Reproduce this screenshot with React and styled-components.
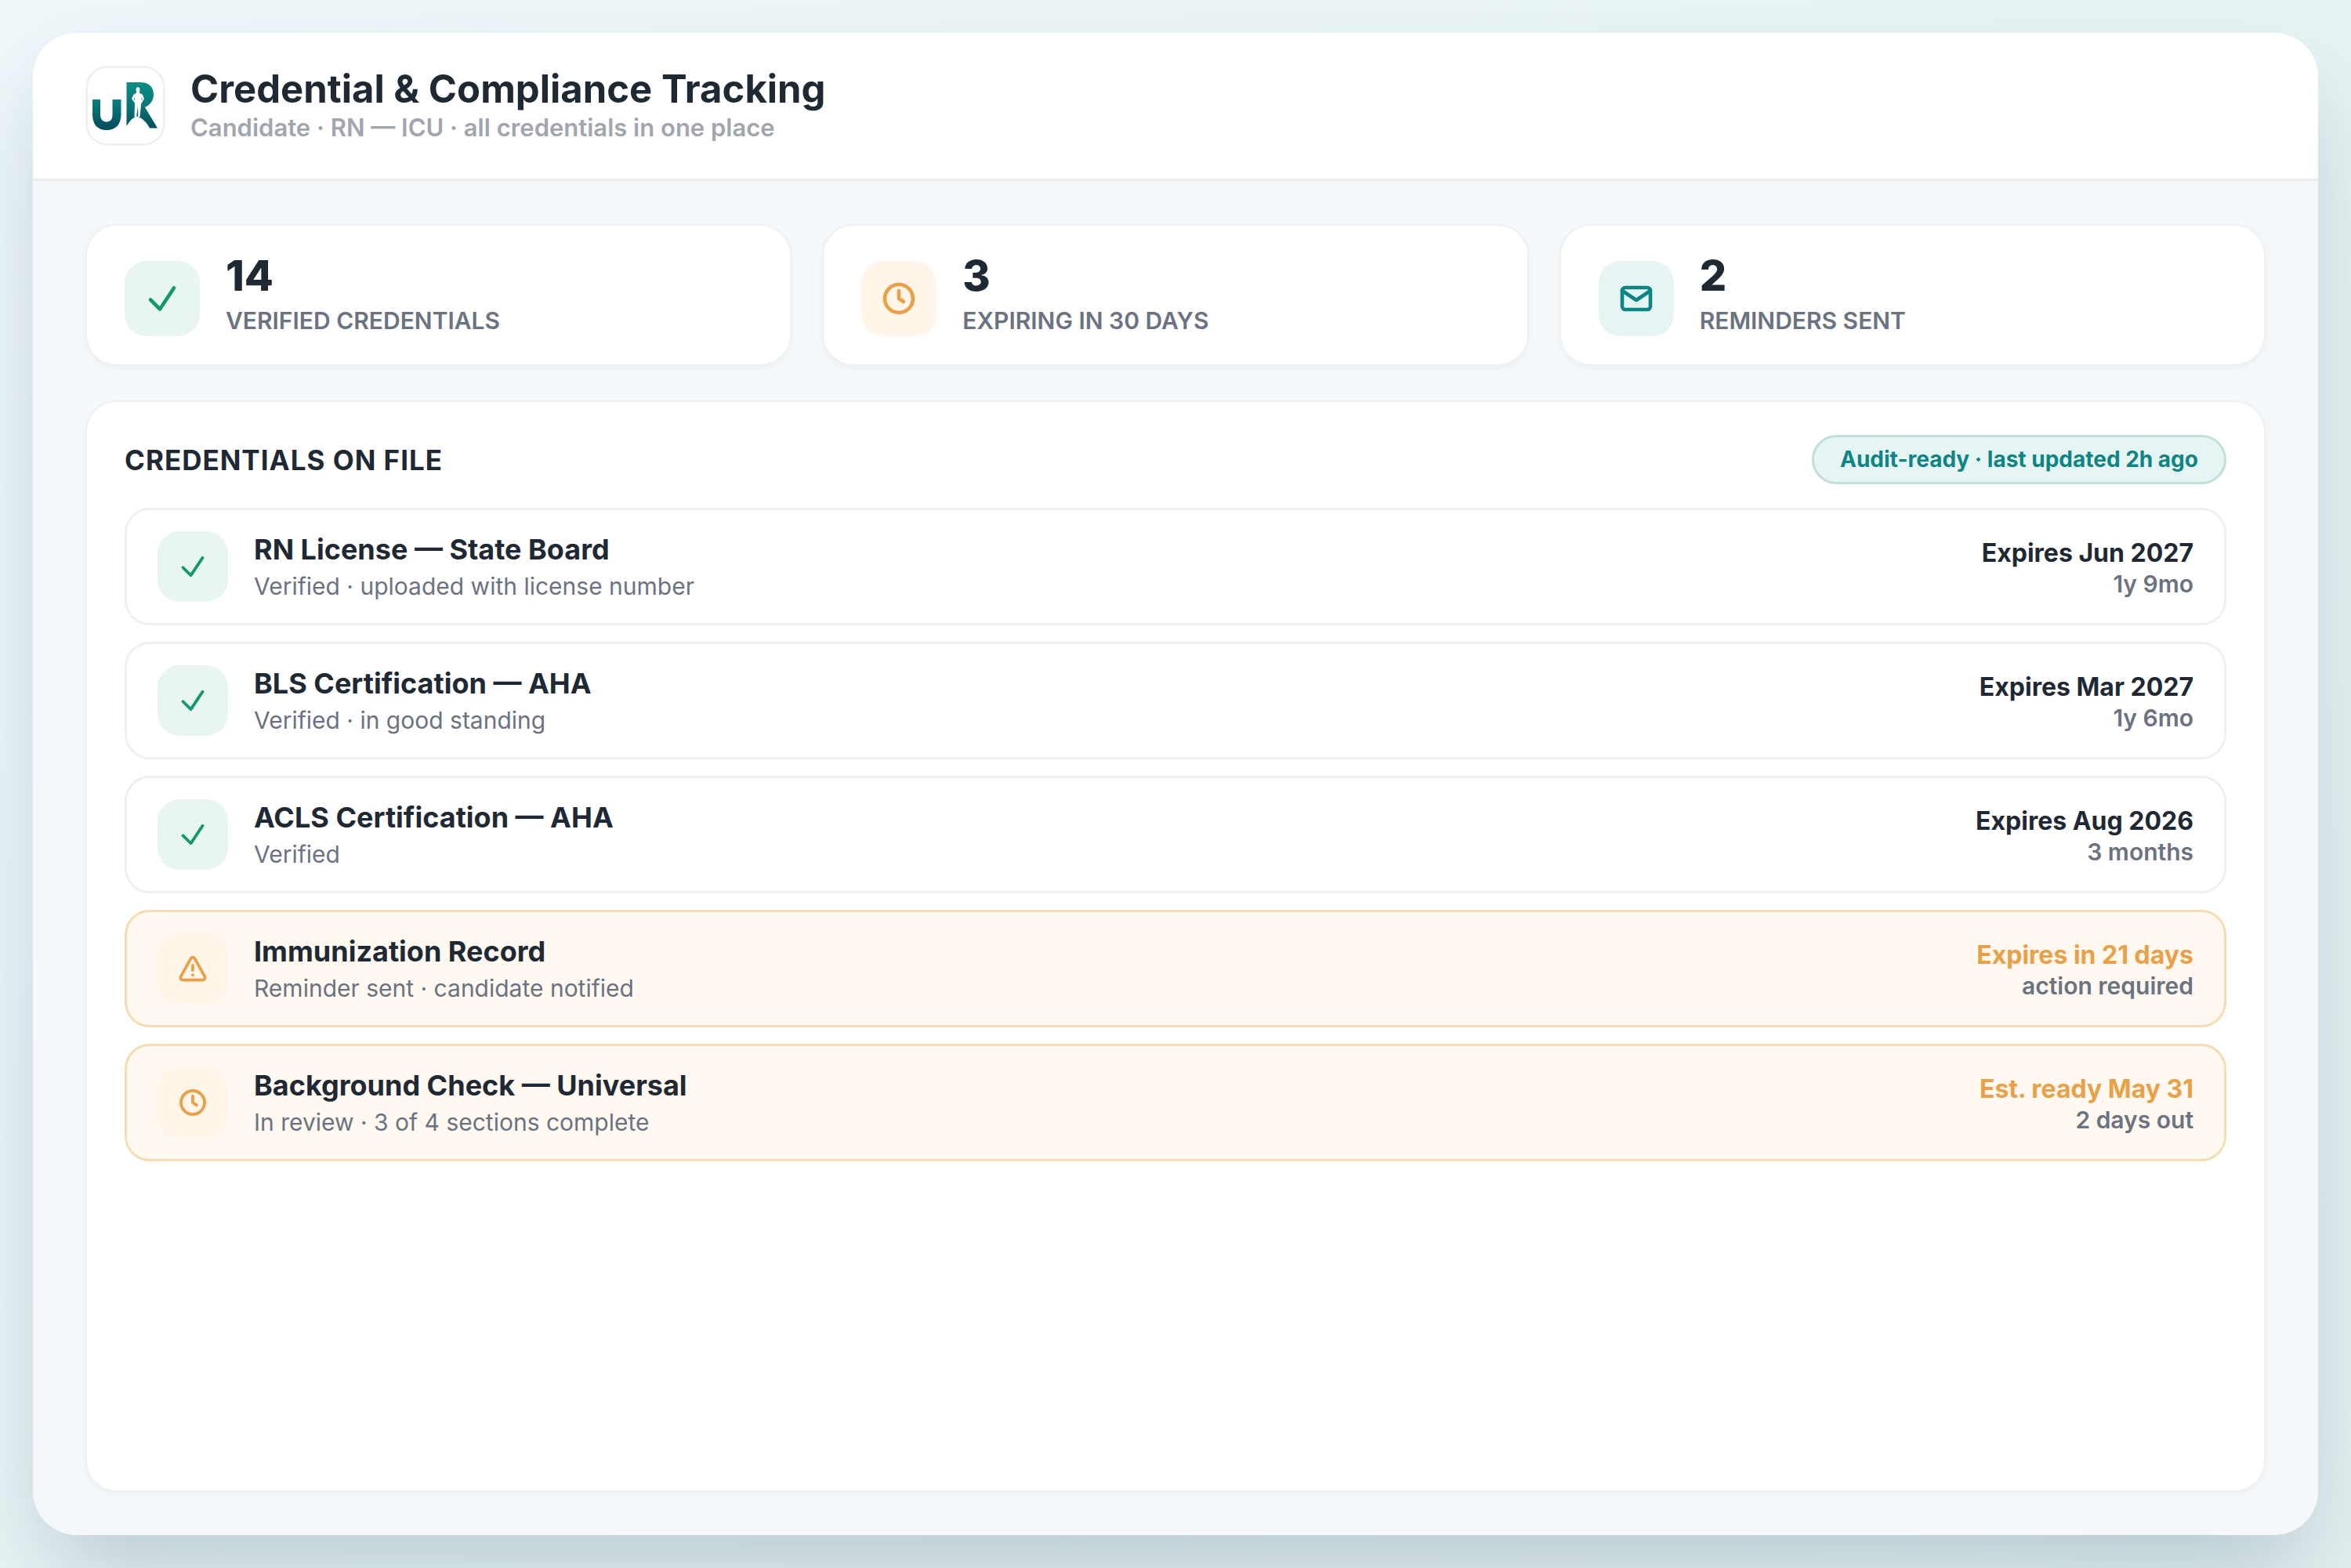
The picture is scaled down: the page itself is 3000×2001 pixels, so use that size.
import React from 'react'
import styled, { createGlobalStyle } from 'styled-components'

const GlobalStyle = createGlobalStyle`
  * {
    box-sizing: border-box;
  }

  body {
    margin: 0;
    font-family: Inter, 'Liberation Sans', sans-serif;
    color: #1f2933;
    background: #e6f1f2;
  }

  h1, h2, h3, p, ul {
    margin: 0;
    padding: 0;
  }
`

const tones = {
  green: { color: '#12996b', background: '#e9f6f0' },
  amber: { color: '#e9a047', background: '#fff5e8' },
  teal: { color: '#0c8583', background: '#e6f4f3' },
}

const Page = styled.div`
  min-height: 100vh;
  display: flex;
  padding: 42px;
  overflow: hidden;
  background: linear-gradient(135deg, #eef7fa 0%, #e8f3f4 50%, #e4f0f1 100%);
`

const Shell = styled.main`
  flex: 1;
  display: flex;
  flex-direction: column;
  border-radius: 56px;
  overflow: hidden;
  background: #f5f8fa;
  box-shadow: 0 60px 120px -20px rgba(20, 60, 85, 0.23);
`

const Header = styled.header`
  display: flex;
  align-items: center;
  gap: 32px;
  padding: 42px 67px;
  background: #fff;
  border-bottom: 3px solid #eceff0;
`

const LogoBox = styled.div`
  width: 102px;
  height: 102px;
  display: flex;
  align-items: center;
  justify-content: center;
  border: 3px solid #f0f1f1;
  border-radius: 28px;
  background: #fff;
`

const Title = styled.h1`
  font-size: 49px;
  line-height: 56px;
  font-weight: 700;
`

const Subtitle = styled.p`
  font-size: 31px;
  line-height: 42px;
  font-weight: 600;
  color: #a0a5ae;
`

const Content = styled.div`
  flex: 1;
  display: flex;
  flex-direction: column;
  gap: 44px;
  padding: 55px 67px;
`

const Stats = styled.section`
  display: grid;
  grid-template-columns: repeat(3, 1fr);
  gap: 39px;
`

const Card = styled.div`
  border: 2px solid #eef1f2;
  border-radius: 40px;
  background: #fff;
  box-shadow: 0 3px 6px rgba(20, 40, 50, 0.04);
`

const StatCard = styled(Card)`
  display: flex;
  align-items: flex-end;
  gap: 33px;
  padding: 37px 48px 36px;
`

const IconTile = styled.span`
  flex: none;
  display: flex;
  align-items: center;
  justify-content: center;
  width: ${({ $size }) => $size}px;
  height: ${({ $size }) => $size}px;
  border-radius: 28px;
  color: ${({ $tone }) => tones[$tone].color};
  background: ${({ $tone }) => tones[$tone].background};
`

const StatText = styled.div`
  display: flex;
  flex-direction: column;
  gap: 10px;
`

const StatValue = styled.p`
  font-size: 54px;
  line-height: 54px;
  font-weight: 800;
`

const StatLabel = styled.p`
  font-size: 30px;
  line-height: 40px;
  font-weight: 600;
  text-transform: uppercase;
  color: #6b7280;
`

const Panel = styled(Card).attrs({ as: 'section' })`
  flex: 1;
  padding: 42px 48px;
`

const PanelHead = styled.div`
  display: flex;
  align-items: center;
  justify-content: space-between;
  margin-bottom: 30px;
`

const PanelTitle = styled.h2`
  font-size: 35px;
  line-height: 42px;
  font-weight: 700;
  letter-spacing: 1px;
  text-transform: uppercase;
`

const Badge = styled.span`
  padding: 10px 33px;
  border: 3px solid #bfe0d9;
  border-radius: 32px;
  font-size: 28px;
  line-height: 37px;
  font-weight: 700;
  color: #0c8583;
  background: #e6f4f3;
`

const List = styled.ul`
  display: flex;
  flex-direction: column;
  gap: 21px;
  list-style: none;
`

const Row = styled.li`
  display: flex;
  align-items: center;
  gap: 33px;
  padding: 27px 39px;
  border: 3px solid ${({ $warn }) => ($warn ? '#f4ddb3' : '#eff1f1')};
  border-radius: 32px;
  background: ${({ $warn }) => ($warn ? '#fff9f1' : '#fff')};
`

const RowBody = styled.div`
  flex: 1;
  display: flex;
  flex-direction: column;
  gap: 6px;
`

const RowTitle = styled.h3`
  font-size: 36px;
  line-height: 44px;
  font-weight: 700;
`

const RowNote = styled.p`
  font-size: 30px;
  line-height: 38px;
  color: #6b7280;
`

const RowStatus = styled.div`
  text-align: right;
`

const Expiry = styled.p`
  font-size: 32px;
  line-height: 44px;
  font-weight: 700;
  color: ${({ $warn }) => ($warn ? '#e9a047' : '#1f2933')};
`

const Remaining = styled.p`
  font-size: 30px;
  line-height: 34px;
  font-weight: 600;
  color: #6b7280;
`

const shapes = {
  check: <path d="m4.5 12.75 6 6 9-13.5" />,
  clock: (
    <>
      <circle cx="12" cy="12" r="9" />
      <path d="M12 7v5l3 2" />
    </>
  ),
  mail: (
    <>
      <rect x="3" y="5" width="18" height="14" rx="2" />
      <path d="m3 7 9 6 9-6" />
    </>
  ),
  alert: (
    <>
      <path d="M10.4 4.4 2.8 18.2a1.8 1.8 0 0 0 1.6 2.6h15.2a1.8 1.8 0 0 0 1.6-2.6L13.6 4.4a1.8 1.8 0 0 0-3.2 0z" />
      <path d="M12 9.5v3.7M12 17h.01" />
    </>
  ),
}

const Icon = ({ name, size }) => (
  <svg
    width={size}
    height={size}
    viewBox="0 0 24 24"
    fill="none"
    stroke="currentColor"
    strokeWidth="2.3"
    strokeLinecap="round"
    strokeLinejoin="round"
    aria-hidden="true"
  >
    {shapes[name]}
  </svg>
)

const Logo = () => (
  <svg width="84" height="64" viewBox="1 0 84 64" role="img" aria-label="uR">
    <defs>
      <linearGradient id="logoFill" x1="0" y1="0" x2="0" y2="64" gradientUnits="userSpaceOnUse">
        <stop offset="0" stopColor="#0b8f86" />
        <stop offset="0.45" stopColor="#077a78" />
        <stop offset="1" stopColor="#03495a" />
      </linearGradient>
    </defs>
    <g fill="url(#logoFill)">
      <path d="M1 24h10v19c0 6 3 9.500 8 9.500s7.500-3.500 7.500-9.500V24h11v19c0 13-7 20-18.500 20S1 56 1 43z" />
      <path d="M44.500 2H62c11 0 17 6 17 15.500 0 7.500-4 13-11 16.500L84 60.500H74C70 53 65 48 58 45.500 52 47 48 52 44.500 58z" />
    </g>
    <g fill="#fff">
      <ellipse cx="59" cy="11.500" rx="2.400" ry="3.200" />
      <path d="M57.500 14h3l1 2 3.300 1.500L67 23l-3 5-1 2-1.500 16h-2.300L59 32l-2 14.500h-2.500L55 29l-1-2-3-4 2.500-5.500L56.500 16z" />
    </g>
    <g fill="#077a78">
      <path d="M55 21.500v3.500l-1.200-1.700zM63.500 21.500v3.500l1.200-1.700z" />
    </g>
  </svg>
)

const stats = [
  { icon: 'check', tone: 'green', value: 14, label: 'Verified credentials' },
  { icon: 'clock', tone: 'amber', value: 3, label: 'Expiring in 30 days' },
  { icon: 'mail', tone: 'teal', value: 2, label: 'Reminders sent' },
]

const credentials = [
  { icon: 'check', title: 'RN License — State Board', note: 'Verified · uploaded with license number', expiry: 'Expires Jun 2027', remaining: '1y 9mo' },
  { icon: 'check', title: 'BLS Certification — AHA', note: 'Verified · in good standing', expiry: 'Expires Mar 2027', remaining: '1y 6mo' },
  { icon: 'check', title: 'ACLS Certification — AHA', note: 'Verified', expiry: 'Expires Aug 2026', remaining: '3 months' },
  { icon: 'alert', title: 'Immunization Record', note: 'Reminder sent · candidate notified', expiry: 'Expires in 21 days', remaining: 'action required', warn: true },
  { icon: 'clock', title: 'Background Check — Universal', note: 'In review · 3 of 4 sections complete', expiry: 'Est. ready May 31', remaining: '2 days out', warn: true },
]

const App = () => {
  return (
    <Page>
      <GlobalStyle />
      <Shell>
        <Header>
          <LogoBox>
            <Logo />
          </LogoBox>
          <div>
            <Title>Credential &amp; Compliance Tracking</Title>
            <Subtitle>Candidate · RN — ICU · all credentials in one place</Subtitle>
          </div>
        </Header>

        <Content>
          <Stats>
            {stats.map(({ icon, tone, value, label }) => (
              <StatCard key={label}>
                <IconTile $size={96} $tone={tone}>
                  <Icon name={icon} size={48} />
                </IconTile>
                <StatText>
                  <StatValue>{value}</StatValue>
                  <StatLabel>{label}</StatLabel>
                </StatText>
              </StatCard>
            ))}
          </Stats>

          <Panel>
            <PanelHead>
              <PanelTitle>Credentials on file</PanelTitle>
              <Badge>Audit-ready · last updated 2h ago</Badge>
            </PanelHead>
            <List>
              {credentials.map(({ icon, title, note, expiry, remaining, warn }) => (
                <Row key={title} $warn={warn}>
                  <IconTile $size={90} $tone={warn ? 'amber' : 'green'}>
                    <Icon name={icon} size={40} />
                  </IconTile>
                  <RowBody>
                    <RowTitle>{title}</RowTitle>
                    <RowNote>{note}</RowNote>
                  </RowBody>
                  <RowStatus>
                    <Expiry $warn={warn}>{expiry}</Expiry>
                    <Remaining>{remaining}</Remaining>
                  </RowStatus>
                </Row>
              ))}
            </List>
          </Panel>
        </Content>
      </Shell>
    </Page>
  )
}

export default App
